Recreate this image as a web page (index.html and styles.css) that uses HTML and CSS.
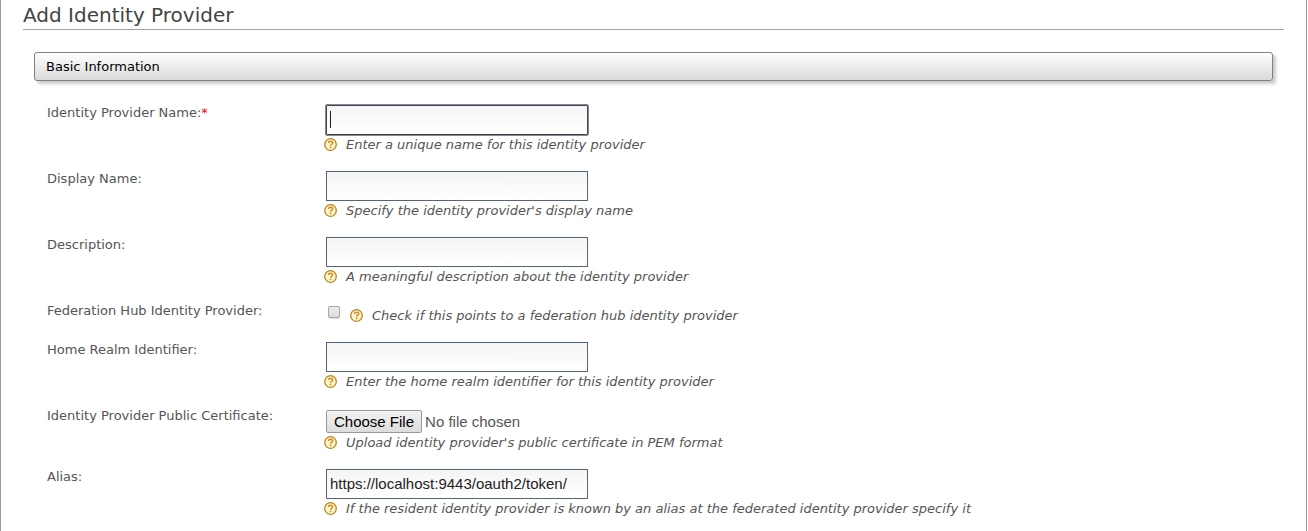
FILE: index.html
```html
<!DOCTYPE html>
<html lang="en">
<head>
<meta charset="utf-8">
<title>Add Identity Provider</title>
<link rel="stylesheet" href="styles.css">
</head>
<body>
<svg class="sprite" aria-hidden="true">
  <symbol id="help" viewBox="0 0 13 13">
    <circle cx="6.5" cy="6.5" r="5.8" fill="#fff6cf" stroke="#b08a1c" stroke-width="1.3"/>
    <path d="M4.4 5C4.5 3.8 5.3 3.2 6.5 3.2S8.6 3.9 8.6 4.9C8.6 6.2 6.6 6.3 6.6 7.8" fill="none" stroke="#e8821c" stroke-width="1.5"/>
    <rect x="5.8" y="8.7" width="1.6" height="1.5" fill="#e8821c"/>
  </symbol>
</svg>
<main class="page">
  <h1 class="title">Add Identity Provider</h1>
  <form class="content">
    <h2 class="section">Basic Information</h2>
    <div class="fields">
      <div class="row">
        <label class="label" for="name">Identity Provider Name:<span class="required">*</span></label>
        <div class="control">
          <input class="text active" id="name" type="text" autofocus>
          <p class="hint"><svg class="icon"><use href="#help"/></svg>Enter a unique name for this identity provider</p>
        </div>
      </div>
      <div class="row">
        <label class="label" for="display">Display Name:</label>
        <div class="control">
          <input class="text" id="display" type="text">
          <p class="hint"><svg class="icon"><use href="#help"/></svg>Specify the identity provider's display name</p>
        </div>
      </div>
      <div class="row">
        <label class="label" for="description">Description:</label>
        <div class="control">
          <input class="text" id="description" type="text">
          <p class="hint"><svg class="icon"><use href="#help"/></svg>A meaningful description about the identity provider</p>
        </div>
      </div>
      <div class="row">
        <label class="label" for="hub">Federation Hub Identity Provider:</label>
        <div class="control inline">
          <input class="check" id="hub" type="checkbox">
          <p class="hint"><svg class="icon"><use href="#help"/></svg>Check if this points to a federation hub identity provider</p>
        </div>
      </div>
      <div class="row">
        <label class="label" for="realm">Home Realm Identifier:</label>
        <div class="control">
          <input class="text" id="realm" type="text">
          <p class="hint"><svg class="icon"><use href="#help"/></svg>Enter the home realm identifier for this identity provider</p>
        </div>
      </div>
      <div class="row">
        <label class="label" for="certificate">Identity Provider Public Certificate:</label>
        <div class="control">
          <input class="file" id="certificate" type="file">
          <p class="hint"><svg class="icon"><use href="#help"/></svg>Upload identity provider's public certificate in PEM format</p>
        </div>
      </div>
      <div class="row">
        <label class="label" for="alias">Alias:</label>
        <div class="control">
          <input class="text" id="alias" type="text" value="https://localhost:9443/oauth2/token/">
          <p class="hint"><svg class="icon"><use href="#help"/></svg>If the resident identity provider is known by an alias at the federated identity provider specify it</p>
        </div>
      </div>
    </div>
  </form>
</main>
</body>
</html>
```
FILE: styles.css
```css
* { box-sizing: border-box; }
body {
  margin: 0;
  background: #fff;
  color: #555;
  font: 13px/15px "DejaVu Sans", sans-serif;
}
.sprite { display: none; }
.page {
  min-height: 100vh;
  margin-right: 1px;
  padding: 0 22px;
  border: solid #999;
  border-width: 0 1px;
}
.title {
  margin: 0;
  padding: 3px 0 2px;
  border-bottom: 1px solid #99a5bf;
  color: #444;
  font-size: 20px;
  font-weight: normal;
  line-height: 24px;
}
.content { padding: 22px 11px 0; }
.section {
  margin: 0;
  padding: 6px 11px;
  border: 1px solid #808080;
  border-radius: 3px;
  background: linear-gradient(#fff, #dadada);
  box-shadow: 3px 3px 3px #ccc;
  color: #000;
  font-size: 13px;
  font-weight: normal;
  line-height: 15px;
}
.fields { padding: 24px 13px 0; }
.row {
  display: grid;
  grid-template-columns: 279px 1fr;
  padding-bottom: 16px;
}
.row:last-child { padding-bottom: 0; }
.required { color: #f00; }
.text {
  display: block;
  width: 262px;
  height: 30px;
  padding: 0 3px 1px;
  border: 1px solid #52657d;
  border-radius: 0;
  outline: none;
  background: linear-gradient(#f5f5f5, #fff);
  color: #222;
  font: 15px "Liberation Sans", Arial, sans-serif;
}
.active {
  border-color: #3d4650;
  border-radius: 1px;
  box-shadow: 0 0 0 1px #85888a;
  background: linear-gradient(#222, #222) 3px 5px / 1px 17px no-repeat, linear-gradient(#f5f5f5, #fff);
  caret-color: transparent;
}
.hint {
  display: flex;
  align-items: flex-start;
  gap: 9px;
  margin: 0 0 0 -2px;
  font-style: italic;
  line-height: 20px;
}
.icon { flex: none; width: 13px; height: 13px; margin-top: 3px; }
.inline {
  display: flex;
  gap: 10px;
  padding: 3px 0 0 2px;
}
.inline .hint { margin: 0; }
.check {
  appearance: none;
  width: 12px;
  height: 12px;
  margin: 0;
  border: 1px solid #a5a5a5;
  border-radius: 2px;
  background: linear-gradient(#eee, #dcdcdc);
  box-shadow: 0 1px 1px #ddd;
}
.file {
  display: block;
  height: 25px;
  padding-top: 2px;
  color: #555;
  font: 15px "Liberation Sans", Arial, sans-serif;
}
.file::file-selector-button {
  height: 23px;
  margin: 0 3px 0 0;
  padding: 0 7px;
  border: 1px solid #999;
  border-radius: 2px;
  background: linear-gradient(#f3f3f3, #dcdcdc);
  color: #000;
  font: inherit;
}
```
